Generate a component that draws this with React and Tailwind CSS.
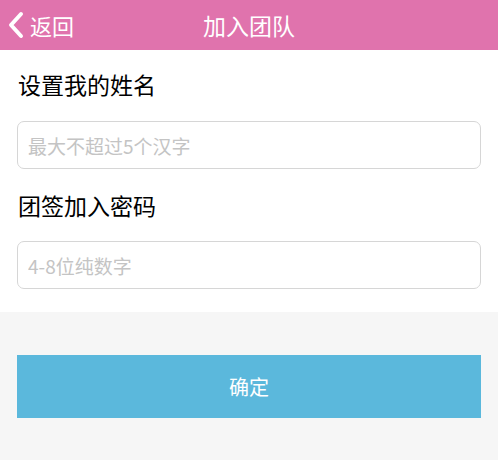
export default function App() {
  return (
    <div
      className="w-[498px] h-[460px] bg-[#f6f6f6] overflow-hidden"
      style={{ fontFamily: '"Noto Sans CJK SC", "Noto Sans", sans-serif' }}
    >
      {/* 顶部导航 */}
      <div className="h-[50px] bg-[#e073ad] flex items-center relative text-white">
        <div className="flex items-center pl-[6px] gap-[4px]">
          <svg width="20" height="28" viewBox="0 0 20 28">
            <path
              d="M15 3 L5 14 L15 25"
              fill="none"
              stroke="white"
              strokeWidth="4"
              strokeLinecap="round"
              strokeLinejoin="round"
            />
          </svg>
          <span className="text-[22px] leading-none">返回</span>
        </div>
        <div className="absolute left-0 right-0 text-center text-[23px] leading-none pointer-events-none">
          加入团队
        </div>
      </div>

      {/* 表单 */}
      <div className="bg-white px-[17px] pt-[19px] pb-[23px]">
        <div className="text-[23px] leading-[30px] text-black pl-[1px]">设置我的姓名</div>
        <input
          placeholder="最大不超过5个汉字"
          className="mt-[22px] w-full h-[48px] border border-[#d6d6d6] rounded-[7px] px-[10px] text-[19px] placeholder:text-[#c4c4c4] outline-none"
        />
        <div className="mt-[21px] text-[23px] leading-[30px] text-black pl-[1px]">团签加入密码</div>
        <input
          placeholder="4-8位纯数字"
          className="mt-[21px] w-full h-[48px] border border-[#d6d6d6] rounded-[7px] px-[10px] text-[19px] placeholder:text-[#c4c4c4] outline-none"
        />
      </div>

      <div className="px-[17px] pt-[43px]">
        <button className="w-full h-[63px] bg-[#5bb8dc] text-white text-[20px]">确定</button>
      </div>
    </div>
  );
}
